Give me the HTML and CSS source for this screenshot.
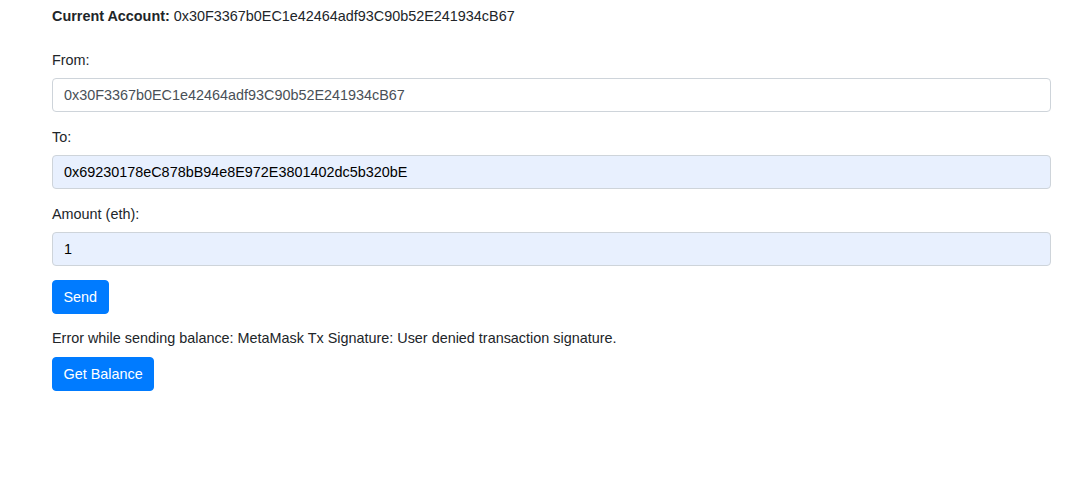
FILE: index.html
```html
<!DOCTYPE html>
<html lang="en">
<head>
<meta charset="utf-8">
<title>Send ETH</title>
<link rel="stylesheet" href="styles.css">
</head>
<body>
<div class="page">
  <p class="account"><strong>Current Account:</strong> 0x30F3367b0EC1e42464adf93C90b52E241934cB67</p>
  <form class="form">
    <div class="form-group">
      <label class="label">From:</label>
      <input class="form-control" type="text" value="0x30F3367b0EC1e42464adf93C90b52E241934cB67">
    </div>
    <div class="form-group">
      <label class="label">To:</label>
      <input class="form-control autofill" type="text" value="0x69230178eC878bB94e8E972E3801402dc5b320bE">
    </div>
    <div class="form-group">
      <label class="label">Amount (eth):</label>
      <input class="form-control autofill" type="text" value="1">
    </div>
    <button type="button" class="btn">Send</button>
  </form>
  <p class="message">Error while sending balance: MetaMask Tx Signature: User denied transaction signature.</p>
  <button type="button" class="btn">Get Balance</button>
</div>
</body>
</html>
```
FILE: styles.css
```css
* {
  box-sizing: border-box;
}
html, body {
  margin: 0;
  padding: 0;
  background: #ffffff;
}
body {
  font-family: "Liberation Sans", Arial, Helvetica, sans-serif;
  font-size: 14.4px;
  line-height: 20px;
  color: #212529;
}
.page {
  padding: 6px 33px 0 52px;
}
.account {
  margin: 0 0 24px 0;
}
.account strong {
  font-weight: 700;
}
.form {
  margin: 0;
}
.form-group {
  margin-bottom: 15px;
}
.form-group:last-of-type {
  margin-bottom: 14px;
}
.label {
  display: block;
  margin-bottom: 8px;
}
.form-control {
  display: block;
  width: 100%;
  height: 34px;
  padding: 6px 11px;
  font-family: inherit;
  font-size: 14.4px;
  line-height: 20px;
  color: #495057;
  background: #ffffff;
  border: 1px solid #ced4da;
  border-radius: 4px;
  outline: none;
}
.form-control.autofill {
  background: #e8f0fe;
  color: #000000;
}
.btn {
  display: inline-block;
  padding: 6px 10.5px;
  font-family: inherit;
  font-size: 14.4px;
  line-height: 20px;
  color: #ffffff;
  background: #007bff;
  border: 1px solid #007bff;
  border-radius: 4px;
  cursor: pointer;
}
.message {
  margin: 14px 0 9px 0;
}
```
